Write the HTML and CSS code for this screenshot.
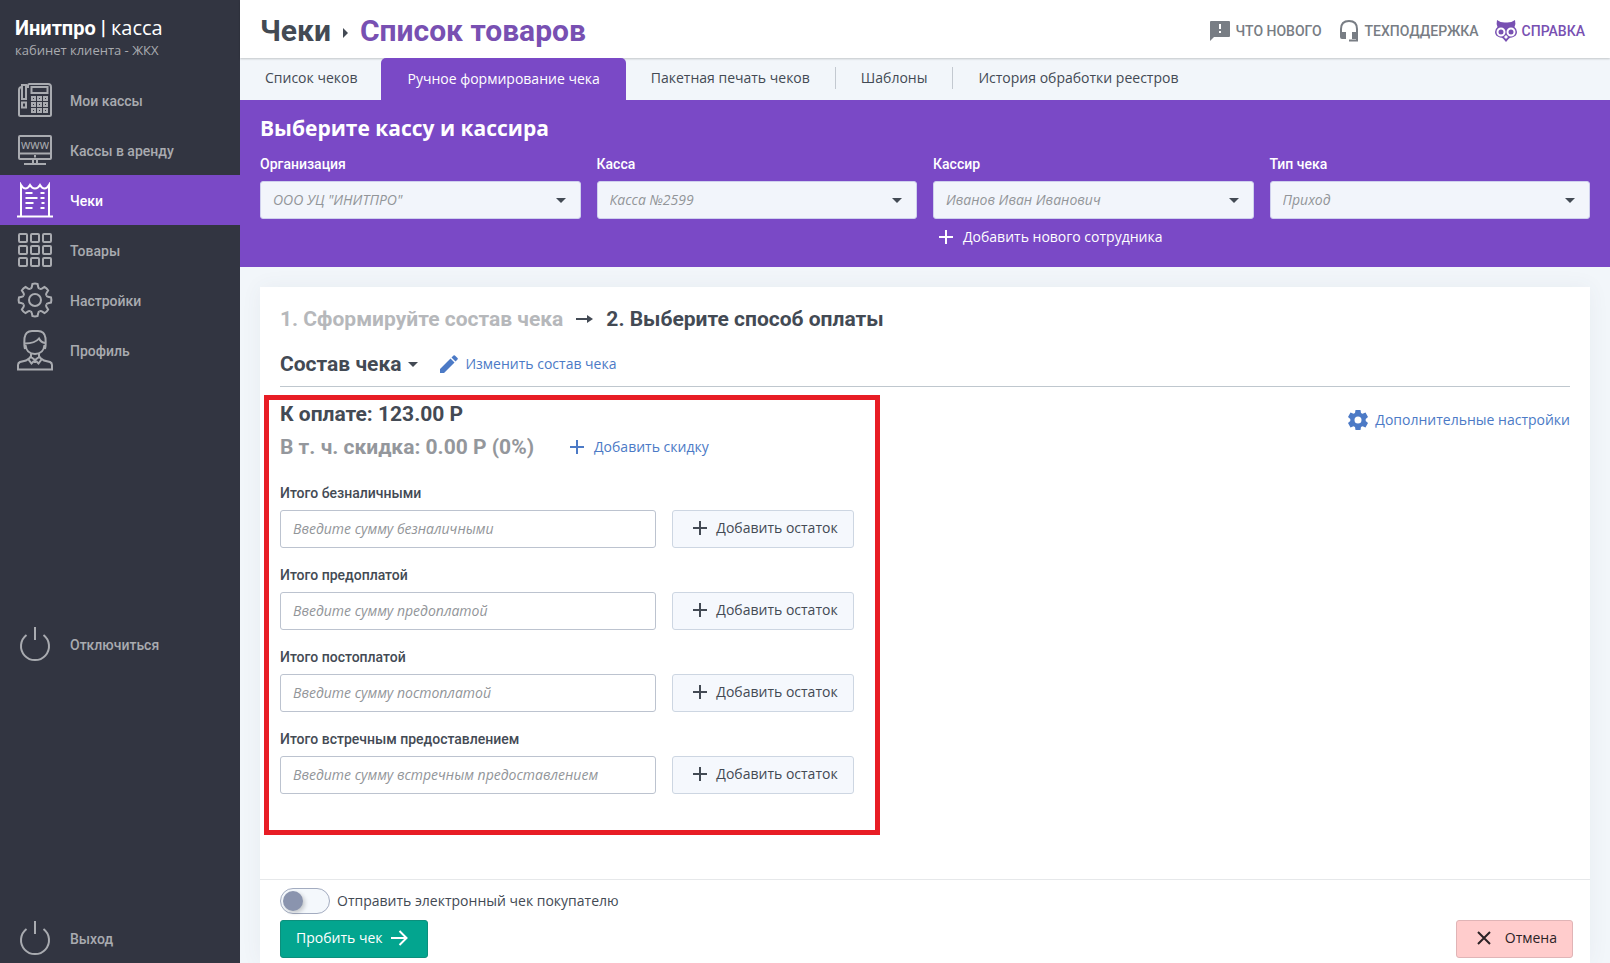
FILE: index.html
```html
<!DOCTYPE html>
<html lang="ru">
<head>
    <meta charset="UTF-8">
    <meta name="viewport" content="width=device-width, initial-scale=1.0">
    <title>Инитпро | касса</title>
    <link rel="stylesheet" href="styles.css">
</head>
<body>
    <!-- Shared symbols -->
    <svg class="symbols" aria-hidden="true">
        <symbol id="plus" viewBox="0 0 14 14"><path d="M7 0v14M0 7h14" stroke="currentColor" stroke-width="2"/></symbol>
        <symbol id="power" viewBox="0 0 36 36"><path d="M18 1v13M9.500 9a14 14 0 1 0 17 0" fill="none" stroke="currentColor" stroke-width="2"/></symbol>
        <symbol id="tooth" viewBox="-18 -18 36 36"><path d="M-4.780-11.550Q-3.400-11.600-3.200-13L-2.600-16Q0-16.800 2.600-16L3.200-13Q3.400-11.600 4.780-11.550" fill="none" stroke="currentColor" stroke-width="2"/></symbol>
    </svg>

    <aside class="sidebar">
        <div class="sidebar-top">
            <div class="logo">
                <div class="logo-name"><b>Инитпро |</b> касса</div>
                <div class="logo-caption">кабинет клиента - ЖКХ</div>
            </div>
            <nav class="menu">
                <a class="menu-item" href="#">
                    <svg class="menu-icon" viewBox="0 0 36 36">
                        <path d="M11 6V3.500q0-1.500 1.500-1.500H31q3 0 3 3v27.500q0 1.500-1.500 1.500h-29Q2 34 2 32.500V8q0-3 3-3"/>
                        <path d="M5 3h4v14H5zM5 20.500h4v5H5zM14.500 5h16v6h-16z"/>
                        <path d="M15 15h3v3h-3zM21 15h3v3h-3zM27 15h3v3h-3zM15 21h3v3h-3zM21 21h3v3h-3zM27 21h3v3h-3zM15 27h3v3h-3zM21 27h3v3h-3zM27 27h3v3h-3z"/>
                    </svg>
                    Мои кассы
                </a>
                <a class="menu-item" href="#">
                    <svg class="menu-icon" viewBox="0 0 36 36">
                        <path d="M2 5q0-1 1-1h30q1 0 1 1v21q0 1-1 1H3q-1 0-1-1zM2 21.500h32M16 27v4M20 27v4M7 32h22M18 23v2.500"/>
                        <text x="18" y="17" text-anchor="middle">www</text>
                    </svg>
                    Кассы в аренду
                </a>
                <a class="menu-item active" href="#">
                    <svg class="menu-icon" viewBox="0 0 36 36">
                        <path d="M0 34.500h36M4 34V3q2 3.500 4.500 3.500T13 3q2 3.500 5 3.500T23 3q2 3.500 4.500 3.500T32 3v31"/>
                        <path d="M8.500 11h7M8.500 16h12M8.500 21h8M8.500 26h7M23.500 11h4M23.500 16h4M24.500 21h3M23.500 26h4"/>
                    </svg>
                    Чеки
                </a>
                <a class="menu-item" href="#">
                    <svg class="menu-icon" viewBox="0 0 36 36">
                        <g id="row"><rect x="2" y="2" width="8" height="8" rx="1"/><rect x="14" y="2" width="8" height="8" rx="1"/><rect x="26" y="2" width="8" height="8" rx="1"/></g>
                        <use href="#row" y="12"/><use href="#row" y="24"/>
                    </svg>
                    Товары
                </a>
                <a class="menu-item" href="#">
                    <svg class="menu-icon" viewBox="0 0 36 36">
                        <circle cx="18" cy="18" r="6"/>
                        <use href="#tooth"/>
                        <use href="#tooth" transform="rotate(45 18 18)"/>
                        <use href="#tooth" transform="rotate(90 18 18)"/>
                        <use href="#tooth" transform="rotate(135 18 18)"/>
                        <use href="#tooth" transform="rotate(180 18 18)"/>
                        <use href="#tooth" transform="rotate(225 18 18)"/>
                        <use href="#tooth" transform="rotate(270 18 18)"/>
                        <use href="#tooth" transform="rotate(315 18 18)"/>
                    </svg>
                    Настройки
                </a>
                <a class="menu-item" href="#">
                    <svg class="menu-icon tall" viewBox="0 0 36 42">
                        <path d="M8 20q-1-3-.500-11Q8.500 2 15 2h6q6.500 0 7.500 7 .5 8-.5 11M8 14.500q10 0 14-5 2 4 6 4.500M8.500 16q1 9 9.500 9t9.500-9"/>
                        <path d="M14 25v3L9 31.500l-6 1.500Q1 34 1 36v4.500h34V36q0-2-2-3l-6-1.500L22 28v-3M14 27l-2.500 3.500 3 4L18 31l3.500 3.500 3-4L22 27M14 28l4 3 4-3M18 31v3"/>
                    </svg>
                    Профиль
                </a>
            </nav>
        </div>
        <a class="menu-item" href="#"><svg class="menu-icon"><use href="#power"/></svg>Отключиться</a>
        <a class="menu-item" href="#"><svg class="menu-icon"><use href="#power"/></svg>Выход</a>
    </aside>

    <main class="main">
        <header class="header">
            <h1 class="title">
                <span>Чеки</span>
                <svg class="title-arrow" viewBox="0 0 5 10"><path d="M0 0l5 5-5 5z" fill="currentColor"/></svg>
                <span class="title-current">Список товаров</span>
            </h1>
            <div class="header-links">
                <a class="header-link" href="#">
                    <svg width="22" height="22" viewBox="0 0 22 22"><path fill="currentColor" fill-rule="evenodd" d="M2 1h18q1 0 1 1v14q0 1-1 1H5l-4 4V2q0-1 1-1zM10 4v5h2V4zM10 11v2h2v-2z"/></svg>
                    ЧТО НОВОГО
                </a>
                <a class="header-link" href="#">
                    <svg width="22" height="22" viewBox="0 0 22 22"><path d="M3 14V9q0-8 8-8t8 8v11.500h-8" fill="none" stroke="currentColor" stroke-width="2"/><path d="M2 12h6v7H4q-2 0-2-2zM14 12h6v7h-6z" fill="currentColor"/></svg>
                    ТЕХПОДДЕРЖКА
                </a>
                <a class="header-link help" href="#">
                    <svg width="22" height="22" viewBox="0 0 22 22"><path d="M2 0q4 3 9 2.500Q16 3 20 0q1 4-.5 7Q22 9 22 12q0 4-5 5.500-2 0-3 1L11 22l-3-3.500q-1-1-3-1Q0 16 0 12q0-3 2.500-5Q1 4 2 0z" fill="currentColor"/><g fill="none" stroke="#fff" stroke-width="2"><circle cx="6" cy="12" r="3.500"/><circle cx="16" cy="12" r="3.500"/></g><path d="M11 15l2 2-2 2-2-2z" fill="#fff"/></svg>
                    СПРАВКА
                </a>
            </div>
        </header>

        <nav class="tabs">
            <a class="tab" href="#">Список чеков</a>
            <a class="tab active" href="#">Ручное формирование чека</a>
            <a class="tab" href="#">Пакетная печать чеков</a>
            <a class="tab" href="#">Шаблоны</a>
            <a class="tab" href="#">История обработки реестров</a>
        </nav>

        <section class="cashier">
            <h2 class="cashier-title">Выберите кассу и кассира</h2>
            <div class="cashier-grid">
                <div class="field">
                    <label for="org">Организация</label>
                    <div class="select"><select id="org"><option>ООО УЦ "ИНИТПРО"</option></select></div>
                </div>
                <div class="field">
                    <label for="kassa">Касса</label>
                    <div class="select"><select id="kassa"><option>Касса №2599</option></select></div>
                </div>
                <div class="field">
                    <label for="cashier">Кассир</label>
                    <div class="select"><select id="cashier"><option>Иванов Иван Иванович</option></select></div>
                    <button class="link-btn add-employee" type="button"><svg class="plus"><use href="#plus"/></svg>Добавить нового сотрудника</button>
                </div>
                <div class="field">
                    <label for="type">Тип чека</label>
                    <div class="select"><select id="type"><option>Приход</option></select></div>
                </div>
            </div>
        </section>

        <form class="card">
            <div class="card-body">
                <h2 class="steps">
                    <span class="step-done">1. Сформируйте состав чека</span>
                    <svg width="17" height="8" viewBox="0 0 17 8"><path d="M0 3h11V0l6 4-6 4V5H0z" fill="currentColor"/></svg>
                    <span>2. Выберите способ оплаты</span>
                </h2>
                <div class="contents">
                    <button class="contents-toggle" type="button">Состав чека <span class="caret"></span></button>
                    <a class="link" href="#">
                        <svg width="18" height="18" viewBox="0 0 18 18"><path d="M0 18v-4L10.500 3.500l4 4L4 18zM11.500 2.500L13.500.5q.7-.7 1.400 0l2.600 2.600q.7.7 0 1.400l-2 2z" fill="currentColor"/></svg>
                        Изменить состав чека
                    </a>
                </div>

                <div class="payment">
                    <div class="totals">
                        <div class="total">К оплате: 123.00 Р</div>
                        <div class="discount">
                            <span>В т. ч. скидка: 0.00 Р (0%)</span>
                            <button class="link-btn" type="button"><svg class="plus"><use href="#plus"/></svg>Добавить скидку</button>
                        </div>
                        <div class="pay-row">
                            <label for="cashless">Итого безналичными</label>
                            <input id="cashless" type="text" placeholder="Введите сумму безналичными">
                            <button class="btn" type="button"><svg class="plus"><use href="#plus"/></svg>Добавить остаток</button>
                        </div>
                        <div class="pay-row">
                            <label for="prepaid">Итого предоплатой</label>
                            <input id="prepaid" type="text" placeholder="Введите сумму предоплатой">
                            <button class="btn" type="button"><svg class="plus"><use href="#plus"/></svg>Добавить остаток</button>
                        </div>
                        <div class="pay-row">
                            <label for="postpaid">Итого постоплатой</label>
                            <input id="postpaid" type="text" placeholder="Введите сумму постоплатой">
                            <button class="btn" type="button"><svg class="plus"><use href="#plus"/></svg>Добавить остаток</button>
                        </div>
                        <div class="pay-row">
                            <label for="counter">Итого встречным предоставлением</label>
                            <input id="counter" type="text" placeholder="Введите сумму встречным предоставлением">
                            <button class="btn" type="button"><svg class="plus"><use href="#plus"/></svg>Добавить остаток</button>
                        </div>
                    </div>
                    <a class="link extra" href="#">
                        <svg width="20" height="20" viewBox="0 0 20 20"><path fill="currentColor" fill-rule="evenodd" d="M7.500 0h5l.5 3 1.500.8 3-1.200L20 7l-2.300 2v2L20 13l-2.500 4.400-3-1.200-1.500.8-.5 3h-5L7 17l-1.500-.8-3 1.200L0 13l2.300-2V9L0 7l2.500-4.400 3 1.200L7 3zM10 6.500a3.500 3.500 0 1 0 0 7 3.500 3.500 0 0 0 0-7z"/></svg>
                        Дополнительные настройки
                    </a>
                </div>
            </div>

            <div class="card-footer">
                <label class="switch"><input type="checkbox">Отправить электронный чек покупателю</label>
                <div class="actions">
                    <button class="btn submit" type="submit">Пробить чек <svg width="17" height="16" viewBox="0 0 17 16"><path d="M0 8h15M8.500 1l7 7-7 7" fill="none" stroke="currentColor" stroke-width="2"/></svg></button>
                    <button class="btn cancel" type="button"><svg width="14" height="14" viewBox="0 0 14 14"><path d="M1 1l12 12M13 1L1 13" stroke="currentColor" stroke-width="2"/></svg>Отмена</button>
                </div>
            </div>
        </form>
    </main>
</body>
</html>
```
FILE: styles.css
```css
* {
    box-sizing: border-box;
}
body {
    margin: 0;
    display: flex;
    min-height: 100vh;
    background: #f2f6fa;
    color: #434a54;
    font-family: "Open Sans", "Noto Sans", sans-serif;
    font-size: 14px;
    line-height: 20px;
}
a {
    color: inherit;
    text-decoration: none;
}
button, input, select {
    font: inherit;
    color: inherit;
}
button {
    cursor: pointer;
}
.symbols {
    position: absolute;
    width: 0;
    height: 0;
}

/* Sidebar */
.sidebar {
    flex: none;
    width: 240px;
    display: flex;
    flex-direction: column;
    justify-content: space-between;
    background: #323541;
    color: #a9abb0;
}
.logo {
    padding: 16px 15px 15px;
    height: 75px;
}
.logo-name {
    color: #fff;
    font-size: 20px;
    line-height: 24px;
}
.logo-name b {
    font-family: Roboto, sans-serif;
}
.logo-caption {
    font-size: 13px;
}
.menu-item {
    display: flex;
    align-items: center;
    gap: 17px;
    height: 50px;
    padding: 2px 0 0 17px;
    font-family: Roboto, sans-serif;
    font-weight: 500;
}
.menu-item.active {
    background: #7a49c6;
    color: #fff;
}
.menu-icon {
    width: 36px;
    height: 36px;
    margin-bottom: 2px;
    fill: none;
    stroke: currentColor;
    stroke-width: 2;
}
.menu-icon.tall {
    height: 42px;
}
.menu-icon text {
    fill: currentColor;
    stroke: none;
    font-family: "Open Sans", sans-serif;
    font-size: 12px;
}

/* Header */
.main {
    flex: 1;
    min-width: 0;
    display: flex;
    flex-direction: column;
}
.header {
    display: flex;
    justify-content: space-between;
    align-items: center;
    height: 58px;
    padding: 4px 25px 0 20px;
    background: #fff;
    box-shadow: 0 1px 2px rgba(0, 0, 0, 0.2);
    font-family: Roboto, sans-serif;
}
.title {
    display: flex;
    align-items: center;
    gap: 12px;
    margin: 0;
    font-size: 30px;
    line-height: 40px;
}
.title-arrow {
    width: 5px;
    height: 10px;
    margin-top: 3px;
}
.title-current {
    color: #7850b2;
}
.header-links {
    display: flex;
    gap: 16px;
}
.header-link {
    display: flex;
    align-items: center;
    gap: 5px;
    color: #787d84;
    font-weight: 500;
}
.header-link.help {
    color: #7850b2;
}

/* Tabs */
.tabs {
    display: flex;
    align-items: stretch;
    height: 42px;
}
.tab {
    display: flex;
    align-items: center;
    padding: 0 25px 2px;
}
.tab:first-child {
    padding-right: 24px;
}
.tab.active {
    position: relative;
    padding: 0 26px;
    background: #7a49c6;
    border-radius: 5px 5px 0 0;
    color: #fff;
}
.tab:nth-child(n+4)::before {
    content: "";
    height: 22px;
    margin-right: 25px;
    border-left: 1px solid #c3c9d0;
}
.tab:nth-child(n+4) {
    padding-left: 0;
}

/* Cashier */
.cashier {
    padding: 12px 20px 20px;
    background: #7a49c6;
    color: #fff;
}
.cashier-title {
    margin: 0 0 10px;
    font-size: 21px;
    line-height: 32px;
}
.cashier-grid {
    display: grid;
    grid-template-columns: repeat(4, 1fr);
    gap: 16px;
}
.field label,
.pay-row label {
    display: block;
    margin-bottom: 7px;
    font-family: Roboto, sans-serif;
    font-weight: 500;
}
.select {
    position: relative;
}
.select::after {
    content: "";
    position: absolute;
    top: 17px;
    right: 15px;
    border: 5px solid transparent;
    border-top-color: #434a54;
    border-bottom: 0;
    pointer-events: none;
}
select {
    appearance: none;
    display: block;
    width: 100%;
    height: 38px;
    padding: 0 30px 0 12px;
    border: 1px solid #cfd0ee;
    border-radius: 3px;
    background: #f2f5fb;
    color: #929599;
    font-style: italic;
}
.plus {
    width: 14px;
    height: 14px;
}
.link-btn {
    display: flex;
    align-items: center;
    gap: 10px;
    padding: 0;
    border: 0;
    background: none;
    color: #4c7ac6;
}
.add-employee {
    margin: 8px 0 0 6px;
    color: #fff;
}

/* Card */
.card {
    flex: 1;
    display: flex;
    flex-direction: column;
    margin: 20px 20px 0;
    background: #fff;
    box-shadow: 0 0 20px rgba(60, 80, 110, 0.06);
}
.card-body {
    flex: 1;
    padding: 20px;
    font-family: Roboto, sans-serif;
}
.steps {
    display: flex;
    align-items: center;
    gap: 13px;
    margin: 0 0 21px;
    font-size: 21px;
    line-height: 24px;
}
.step-done {
    color: #b6b8bb;
}
.contents {
    display: flex;
    align-items: center;
    gap: 22px;
    padding-bottom: 10px;
    border-bottom: 1px solid #bfc7ce;
}
.contents-toggle {
    display: flex;
    align-items: center;
    gap: 7px;
    padding: 0;
    border: 0;
    background: none;
    font-size: 21px;
    font-weight: bold;
    line-height: 24px;
}
.caret {
    border: 5px solid transparent;
    border-top-color: #434a54;
    border-bottom: 0;
}
.link {
    display: flex;
    align-items: center;
    gap: 7px;
    color: #4c7ac6;
    font-family: "Open Sans", "Noto Sans", sans-serif;
}
.payment {
    display: flex;
    justify-content: space-between;
    align-items: flex-start;
    padding-top: 8px;
}
.totals {
    margin-left: -16px;
    padding: 2px 21px 36px 11px;
    border: 5px solid #e81d25;
}
.total,
.discount {
    font-size: 21px;
    font-weight: bold;
    line-height: 24px;
}
.discount {
    display: flex;
    align-items: center;
    gap: 36px;
    margin: 9px 0 24px;
    color: #94979c;
}
.link-btn,
.btn {
    font-family: "Open Sans", "Noto Sans", sans-serif;
    font-size: 14px;
    font-weight: normal;
    line-height: 20px;
}
.pay-row {
    display: grid;
    grid-template-columns: 376px 182px;
    column-gap: 16px;
    margin-top: 17px;
}
.pay-row label {
    grid-column: 1 / -1;
}
.pay-row input {
    height: 38px;
    padding: 0 12px 2px;
    border: 1px solid #bcc3cf;
    border-radius: 3px;
    background: #fff;
    font-family: "Open Sans", "Noto Sans", sans-serif;
}
.pay-row input::placeholder {
    color: #929599;
    font-style: italic;
}
.btn {
    display: flex;
    justify-content: center;
    align-items: center;
    gap: 9px;
    height: 38px;
    padding: 0 15px 2px 20px;
    border: 1px solid #cdd6e2;
    border-radius: 3px;
    background: #f5f8fd;
}
.extra {
    margin-top: 15px;
}

/* Footer */
.card-footer {
    display: flex;
    flex-direction: column;
    gap: 6px;
    padding: 8px 17px 5px 20px;
    border-top: 1px solid #e6e8ea;
}
.switch {
    display: flex;
    align-items: center;
    align-self: flex-start;
    gap: 7px;
    height: 26px;
}
.switch input {
    appearance: none;
    width: 50px;
    height: 26px;
    margin: 0;
    padding: 2px;
    border: 1px solid #a3acc0;
    border-radius: 13px;
    background: #f4f8fc;
}
.switch input::before {
    content: "";
    display: block;
    width: 20px;
    height: 20px;
    border-radius: 50%;
    background: #8a94ae;
    box-shadow: 2px 2px 4px rgba(0, 0, 0, 0.2);
}
.switch input:checked::before {
    margin-left: auto;
}
.actions {
    display: flex;
    justify-content: space-between;
}
.submit {
    padding: 0 19px 2px 15px;
    border-color: #0c8f7c;
    background: #03a58f;
    color: #fff;
}
.cancel {
    gap: 14px;
    padding: 0 15px 2px 20px;
    border-color: #e0b4b6;
    background: #ffcccc;
    color: #2b2226;
}
```
